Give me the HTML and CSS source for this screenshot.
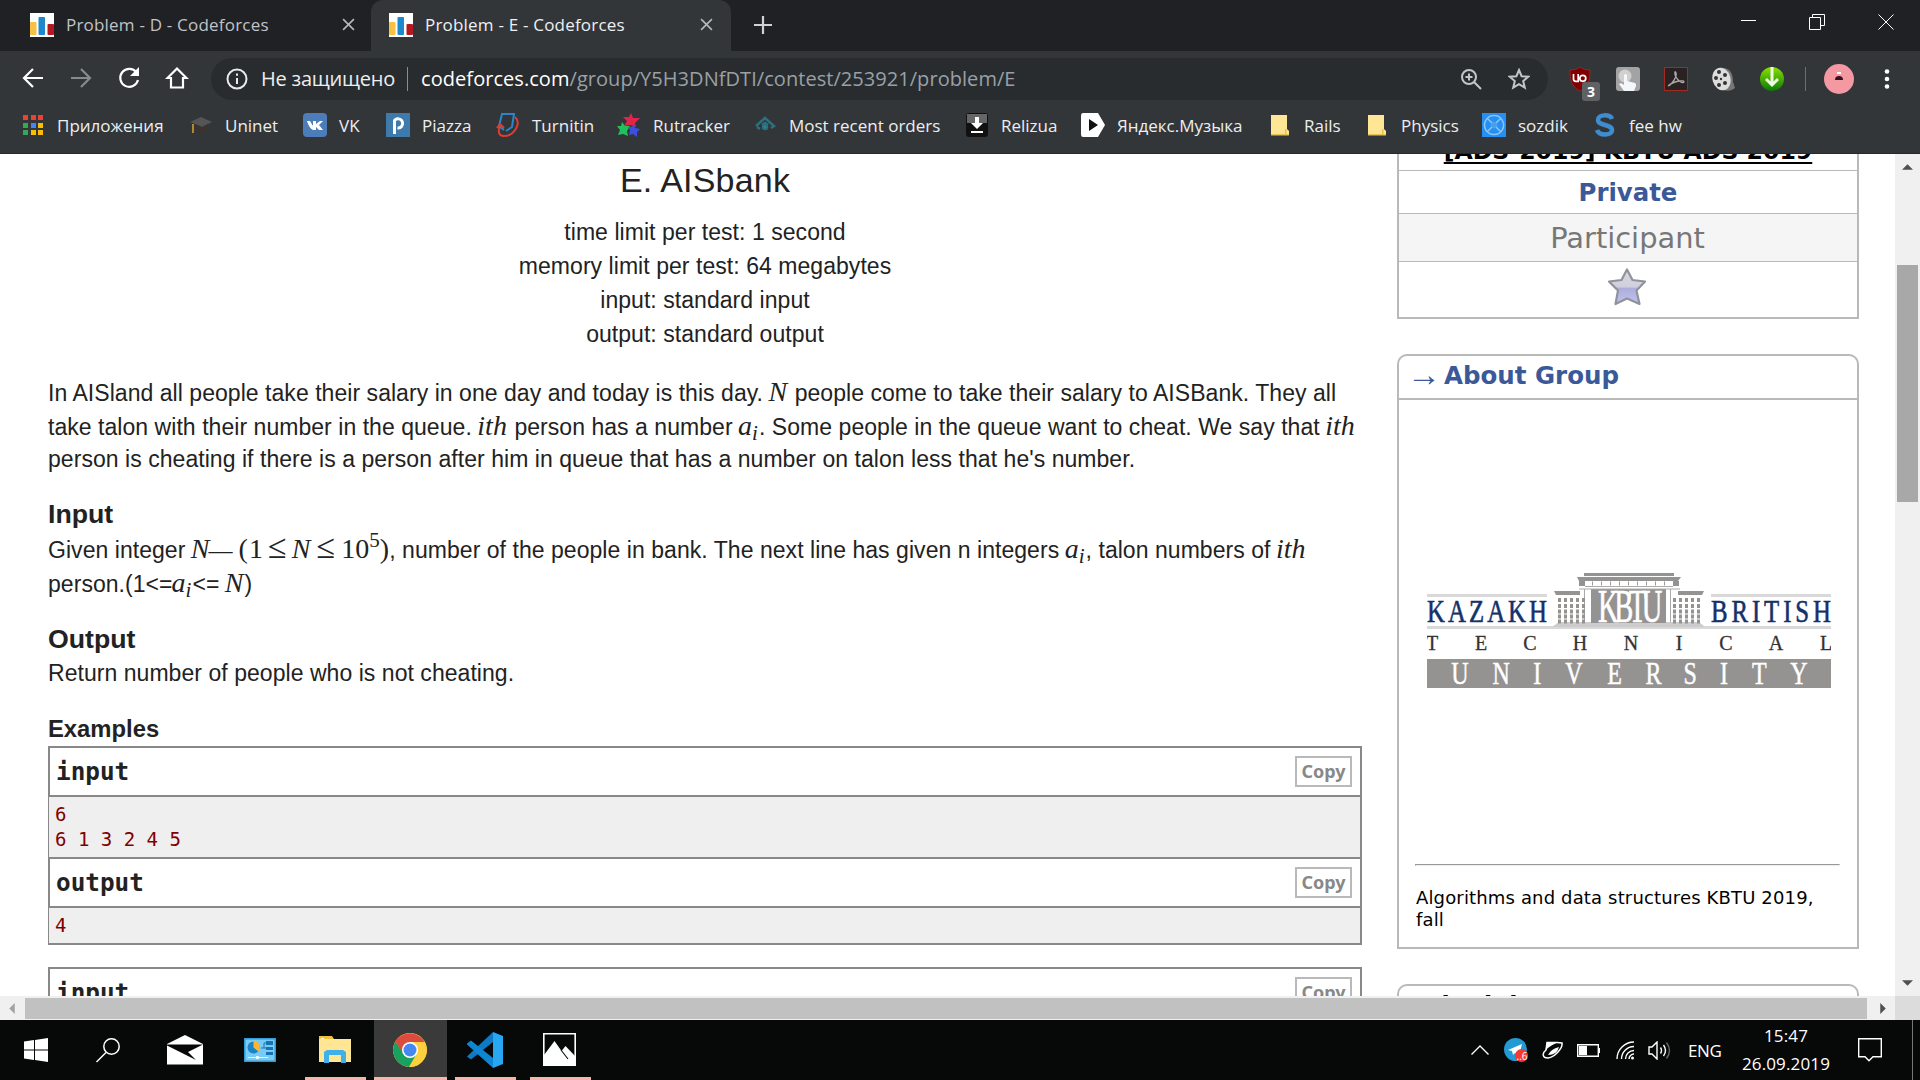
FILE: index.html
```html
<!DOCTYPE html>
<html lang="ru">
<head>
<meta charset="utf-8">
<title>Problem - E - Codeforces</title>
<link rel="stylesheet" href="styles.css">
</head>
<body>
<svg width="0" height="0" class="defs">
  <defs>
    <symbol id="cf" viewBox="0 0 24 24"><path fill="#fff" d="M0 0h24v24H0z"/><rect x="0" y="9" width="6.500" height="13" rx="1" fill="#f7c244"/><rect x="8.500" y="4" width="6.500" height="18" rx="1" fill="#1e88cc"/><rect x="17.500" y="11" width="6.500" height="11" rx="1" fill="#b5191f"/></symbol>
    <symbol id="folder" viewBox="0 0 24 24"><path fill="#ffe694" d="M3 2h16v14l2 2v4H3z"/><path fill="#e8c252" d="M3 21h18v1.500H3zM17 16h1.500v5H17z"/></symbol>
  </defs>
</svg>

<header class="tabs">
  <div class="tab"><svg class="fav"><use href="#cf"/></svg><span class="tab-title">Problem - D - Codeforces</span><svg class="x" viewBox="0 0 12 12"><path d="M1 1l10 10M11 1L1 11"/></svg></div>
  <div class="tab active"><svg class="fav"><use href="#cf"/></svg><span class="tab-title">Problem - E - Codeforces</span><svg class="x" viewBox="0 0 12 12"><path d="M1 1l10 10M11 1L1 11"/></svg></div>
  <svg class="plus" viewBox="0 0 18 18"><path d="M9 0v18M0 9h18"/></svg>
  <div class="win">
    <svg width="15" height="16" viewBox="0 0 15 16"><path d="M0 6.500h15"/></svg>
    <svg width="16" height="16" viewBox="0 0 16 16"><path d="M.5 3.500h11v12H.5zM3.500 3V.5h12v11H12"/></svg>
    <svg width="16" height="16" viewBox="0 0 16 16"><path d="M.5.5l15 15M15.500.5l-15 15"/></svg>
  </div>
</header>

<div class="toolbar">
  <svg class="nav" viewBox="0 0 24 24"><path d="M22 12H4M12 3l-9 9 9 9"/></svg>
  <svg class="nav dim" viewBox="0 0 24 24"><path d="M2 12h18M12 3l9 9-9 9"/></svg>
  <svg class="nav" viewBox="0 0 24 24"><path d="M19.500 6.500A9 9 0 1 0 21 14"/><path class="solid" d="M22 1v9h-9z"/></svg>
  <svg class="nav" viewBox="0 0 24 24"><path d="M12 2.500L2.500 12H6v9.500h12V12h3.500z"/></svg>
  <div class="omni">
    <svg class="info" viewBox="0 0 22 22"><circle cx="11" cy="11" r="9.500"/><path d="M11 10v6M11 5.500v2.200"/></svg>
    <span class="unsafe">Не защищено</span><i class="sep"></i>
    <span class="url"><b>codeforces.com</b>/group/Y5H3DNfDTI/contest/253921/problem/E</span>
    <svg class="oi" viewBox="0 0 22 22"><circle cx="9" cy="9" r="7"/><path d="M14 14l7 7M9 5.500v7M5.500 9h7"/></svg>
    <svg class="oi" viewBox="0 0 22 22"><path d="M11 2l2.600 6.200 6.700.5-5.100 4.400 1.600 6.600L11 16.200l-5.800 3.500 1.600-6.600L1.700 8.700l6.700-.5z"/></svg>
  </div>
  <div class="ext">
    <div class="ub"><svg width="24" height="24" viewBox="0 0 24 24"><path fill="#800000" stroke="#a33" stroke-width=".6" d="M12 0c3 2.500 6 3 10 3 0 10-1 16-10 21C3 19 2 13 2 3c4 0 7-.5 10-3z"/><path fill="none" stroke="#fff" stroke-width="1.700" d="M5.500 7v5q0 2.300 2.300 2.300h2.400V7"/><circle cx="14.800" cy="11.300" r="3" fill="none" stroke="#fff" stroke-width="1.700"/></svg><em>3</em></div>
    <svg width="24" height="24" viewBox="0 0 24 24"><rect width="24" height="24" rx="3" fill="#a3a3a3"/><circle cx="9" cy="9" r="6.500" fill="#d0d0d0"/><path fill="#f4f8fd" d="M8 8q2-2 3 0v6l8 2q1.500 1 1 3l-2 5H8l-5-7q2-2 5 1z"/></svg>
    <svg width="24" height="24" viewBox="0 0 24 24"><path fill="#2a2222" stroke="#a22a20" d="M.5.5h23v23H.5z"/><path fill="none" stroke="#aaa" stroke-width="1.300" d="M4 19c5-2 9-10 8-13s-2 0 0 4 7 7 8 5-9-2-16 4z"/></svg>
    <svg width="24" height="24" viewBox="0 0 24 24"><path fill="#777" d="M7 1q14-2 14 14l2 6q-4 4-12 2z"/><ellipse cx="9.500" cy="12" rx="9" ry="11.500" fill="#ddd" transform="rotate(-15 9.500 12)"/><g fill="#333"><circle cx="7" cy="5" r="2"/><circle cx="13" cy="8" r="2"/><circle cx="4" cy="11" r="2"/><circle cx="9" cy="12" r="1.200"/><circle cx="7" cy="18" r="2"/><circle cx="13" cy="16" r="2"/></g></svg>
    <svg width="24" height="24" viewBox="0 0 24 24"><defs><linearGradient id="gg" x2="0" y2="1"><stop stop-color="#8be000"/><stop offset="1" stop-color="#087a05"/></linearGradient></defs><circle cx="12" cy="12" r="12" fill="url(#gg)"/><path fill="none" stroke="#eafbe0" stroke-width="3" d="M12 0v17M6 12l6 6 6-6"/></svg>
    <i class="bar"></i>
    <svg class="avatar" width="30" height="30" viewBox="0 0 30 30"><circle cx="15" cy="15" r="15" fill="#f498a2"/><path fill="#3a1020" d="M11 16q0-4 4-4t4 4z"/><path fill="#fff" d="M13 8h4v2h-4z"/></svg>
    <svg class="kebab" width="6" height="20" viewBox="0 0 6 20" fill="#fff"><circle cx="3" cy="2.500" r="2.300"/><circle cx="3" cy="10" r="2.300"/><circle cx="3" cy="17.500" r="2.300"/></svg>
  </div>
</div>

<nav class="bookmarks">
  <a><svg viewBox="0 0 24 24"><g fill="#ea4335"><path d="M2 2h5v5H2zM10 2h5v5h-5zM17 2h5v5h-5z"/></g><path fill="#34a853" d="M2 10h5v5H2zM2 17h5v5H2z"/><path fill="#4285f4" d="M10 10h5v5h-5z"/><path fill="#fbbc05" d="M17 10h5v5h-5zM10 17h5v5h-5zM17 17h5v5h-5z"/></svg><span>Приложения</span></a>
  <a><svg viewBox="0 0 24 24"><path fill="#555" d="M1 9l11-5 11 5-10 5z"/><path fill="#3a3330" d="M6 11l7 3 6-3v7q-6 4-13 0z"/><path stroke="#e2a52b" stroke-width="1.500" d="M4 11v9" fill="none"/></svg><span>Uninet</span></a>
  <a><svg viewBox="0 0 24 24"><rect width="24" height="24" rx="4" fill="#4d7db8"/><path d="M4 8h3l3 5V8h3v3l4-3h3l-4 4 4 5h-4l-3-3v3h-3Q6 15 4 8z" fill="#fff"/></svg><span>VK</span></a>
  <a><svg viewBox="0 0 24 24"><path fill="#3e7aab" d="M0 0h24v24H0z"/><path d="M8.500 21V7.500a4.600 4.600 0 1 1 3 7.500" fill="none" stroke="#fff" stroke-width="3"/></svg><span>Piazza</span></a>
  <a><svg viewBox="0 0 24 24" fill="none" stroke-width="2"><path stroke="#2b85c8" d="M8 17L3 13 6 1h12l-2 13-6 4"/><path stroke="#e23b30" d="M19 4c7 6-1 19-11 19-6 0-6-5-4-11M1 15l3-4 4 4"/></svg><span>Turnitin</span></a>
  <a><svg viewBox="0 0 24 24"><path fill="#e0244b" d="M14 0l2 5 7 0-5 5 1 4-6-2-6 1 3-5-4-4h6z"/><path fill="#1fc25a" d="M5 9l3 4 5 0-3 5 1 5-5-2-5 1 2-5-3-4h4z"/><path fill="#3d4fe0" d="M17 11l1 4 5 1-3 3 0 5-4-3-4 1 1-5-2-3h4z"/></svg><span>Rutracker</span></a>
  <a><svg viewBox="0 0 24 24" fill="none" stroke="#2b7180" stroke-width="2.500"><path d="M3 13l9-8 9 8-3 2M7 16l-3-2M9 12l3-2 3 2"/><circle cx="12" cy="14" r="2" fill="#36a0ae"/></svg><span>Most recent orders</span></a>
  <a><svg viewBox="0 0 24 24"><rect x="1" width="22" height="24" rx="3" fill="#111"/><path fill="#666" d="M2 1h20v9H2z"/><path fill="#fff" d="M10 4h4v6h4l-6 6-6-6h4zM6 18h12v2H6z"/></svg><span>Relizua</span></a>
  <a><svg viewBox="0 0 24 24"><path fill="#fff" d="M2 0h15l7 12-7 12H2q-2 0-2-3V3q0-3 2-3z"/><path fill="#111" d="M8 6l9 6-9 6z"/></svg><span>Яндекс.Музыка</span></a>
  <a><svg><use href="#folder"/></svg><span>Rails</span></a>
  <a><svg><use href="#folder"/></svg><span>Physics</span></a>
  <a><svg viewBox="0 0 24 24"><path fill="#2490f4" d="M0 0h24v24H0z"/><path fill="none" stroke="#8cc4f5" stroke-width="1.500" d="M5 5l14 14M19 5L5 19M12 2.500a9.500 9.500 0 1 0 .1 0"/><path fill="#4a9fe8" d="M12 8l4 4-4 4-4-4z"/></svg><span>sozdik</span></a>
  <a><svg viewBox="0 0 24 24"><path fill="none" stroke="#3f8dd0" stroke-width="4.500" d="M19 6C17 1 5 1 5 7s14 4 14 10-13 6-15 0"/></svg><span>fee hw</span></a>
</nav>

<main class="view">
  <div class="page">
    <section class="problem">
      <div class="title">E. AISbank</div>
      <div class="limits"><div>time limit per test: 1 second</div><div>memory limit per test: 64 megabytes</div><div>input: standard input</div><div>output: standard output</div></div>
      <div class="para">
        <div class="ln l1">In AISland all people take their salary in one day and today is this day. <i>N</i> people come to take their salary to AISBank. They all</div>
        <div class="ln l2">take talon with their number in the queue. <i>ith</i> person has a number <i>a<sub>i</sub></i>. Some people in the queue want to cheat. We say that <i>ith</i></div>
        <div class="ln l3">person is cheating if there is a person after him in queue that has a number on talon less that he's number.</div>
      </div>
      <h2>Input</h2>
      <div class="para given">
        <div class="ln">Given integer <i>N</i><span class="m dash">—</span><span class="m"><span class="open">(</span>1</span><span class="m le">≤</span><i>N</i><span class="m le">≤</span><span class="m">10<sup>5</sup>)</span>, number of the people in bank. The next line has given n integers <i>a<sub>i</sub></i>, talon numbers of <i>ith</i></div>
        <div class="ln">person.(1&lt;=<i>a<sub>i</sub></i>&lt;= <i>N</i>)</div>
      </div>
      <h2>Output</h2>
      <div class="para out"><div class="ln">Return number of people who is not cheating.</div></div>
      <h3>Examples</h3>
      <div class="sample">
        <div class="io"><span>input</span><button>Copy</button></div>
        <pre>6
6 1 3 2 4 5</pre>
        <div class="io"><span>output</span><button>Copy</button></div>
        <pre class="short">4</pre>
      </div>
      <div class="sample"><div class="io"><span>input</span><button>Copy</button></div></div>
    </section>
    <aside>
      <div class="box group">
        <div class="gname"><u>[ADS-2019] KBTU ADS 2019</u></div>
        <div class="gpriv">Private</div>
        <div class="gpart">Participant</div>
        <div class="gstar"><svg width="40" height="40" viewBox="0 0 40 40"><defs><linearGradient id="sg" x2="0" y2="1"><stop stop-color="#d9d9dd"/><stop offset=".5" stop-color="#cfcfe0"/><stop offset=".55" stop-color="#aeaedd"/><stop offset="1" stop-color="#c2c2f2"/></linearGradient></defs><path d="M20 2.500l5.500 10.500 12.500 1.500-8.500 9 3 13.500-12.500-5.500L8.500 37l2.500-13.500L2 14.500 14.500 13z" fill="url(#sg)" stroke="#92929c" stroke-width="2.200" stroke-linejoin="round"/></svg></div>
      </div>
      <div class="box about">
        <div class="cap"><span class="arr">→</span>About Group</div>
        <svg class="logo" viewBox="0 0 404 118" width="404" height="118">
          <g fill="#d9d9d9"><path d="M0 21h120v3H0zM284 21h120v3H284zM0 53h404v3H0z"/></g>
          <path fill="#ccc" d="M132 49h140l6 5H125z"/>
          <g fill="#959391"><path d="M157 0h90v3h-90zM150 4h104l-3 4H152zM152 8h6v5h-6zM246 8h6v5h-6zM127 18h26v4h-24zM251 18h26l-2 4h-24zM164 16h75v34h-75z"/></g>
          <path fill="none" stroke="#aaa" d="M158 13.500h88M152 16h101M157.500 16v33M243.500 16v33"/>
          <path stroke="#959391" stroke-width="4" stroke-dasharray="3 3" d="M131 27h28M131 33h28M131 38.500h28M131 43.500h28M131 48.500h28M246 27h28M246 33h28M246 38.500h28M246 43.500h28M246 48.500h28"/>
          <path stroke="#999" stroke-dasharray="1 8" stroke-width="4" d="M165 10.500h76"/>
          <g class="serif">
            <g transform="translate(0 48.500) scale(.8 1)"><text font-size="31" fill="#14316b" textLength="150" lengthAdjust="spacing" class="logo-b">KAZAKH</text></g>
            <g transform="translate(284 48.500) scale(.8 1)"><text font-size="31" fill="#14316b" textLength="150" lengthAdjust="spacing" class="logo-b">BRITISH</text></g>
            <g transform="translate(171 48.500) scale(.62 1)"><text font-size="46" fill="#fff" stroke="#fff" stroke-width=".7" textLength="104" lengthAdjust="spacing">KBTU</text></g>
            <g font-size="20" fill="#333" text-anchor="middle" class="tech"><text x="5" y="77">T</text><text x="54" y="77">E</text><text x="103" y="77">C</text><text x="153" y="77">H</text><text x="204" y="77">N</text><text x="252" y="77">I</text><text x="299" y="77">C</text><text x="349" y="77">A</text><text x="399" y="77">L</text></g>
            <path fill="#959391" d="M0 86h404v29H0z"/>
            <g font-size="32" fill="#fff" stroke="#fff" stroke-width=".5" text-anchor="middle" transform="scale(.75 1)"><text x="44" y="111">U</text><text x="99" y="111">N</text><text x="147" y="111">I</text><text x="196" y="111">V</text><text x="250" y="111">E</text><text x="302" y="111">R</text><text x="351" y="111">S</text><text x="396" y="111">I</text><text x="443" y="111">T</text><text x="496" y="111">Y</text></g>
          </g>
        </svg>
        <hr>
        <p>Algorithms and data structures KBTU 2019,<br>fall</p>
      </div>
      <div class="box next"><span>Schedule</span></div>
    </aside>
  </div>
  <div class="vs"><svg class="up" viewBox="0 0 12 6"><path d="M0 6l6-6 6 6z"/></svg><i></i><svg class="dn" viewBox="0 0 12 6"><path d="M0 0l6 6 6-6z"/></svg></div>
</main>
<div class="hs"><svg class="lt" viewBox="0 0 6 12"><path d="M6 0L0 6l6 6z"/></svg><i></i><svg class="rt" viewBox="0 0 6 12"><path d="M0 0l6 6-6 6z"/></svg><b></b></div>

<footer class="taskbar">
  <div class="app"><svg width="24" height="24" viewBox="0 0 24 24" fill="#fff"><path d="M0 3.500l10-1.500v9.500H0zM11 2l13-2v11.500H11zM0 12.500h10V22L0 20.500zM11 12.500h13V24l-13-2z"/></svg></div>
  <div class="app"><svg width="24" height="25" viewBox="0 0 24 25" fill="none" stroke="#fff" stroke-width="1.500"><circle cx="15.500" cy="8.500" r="7.700"/><path d="M10 14.500L.5 24"/></svg></div>
  <div class="app"><svg width="36" height="30" viewBox="0 0 36 30"><path fill="#fff" d="M0 9L18 0l18 9v20.500H0z"/><path fill="#080808" d="M0 9.500h36L21 17l8 8L0 10.500z"/></svg></div>
  <div class="app"><svg width="32" height="24" viewBox="0 0 32 24"><path fill="#2f9ad8" d="M0 0h32v24H0z"/><path fill="#77cbf5" d="M1.500 1.500h29v21h-29z"/><circle cx="9.500" cy="9.500" r="6" fill="#1c83c6"/><path fill="#ffb62e" d="M9.500 9.500V2.500a7 7 0 0 1 5 11z"/><path fill="#1873b5" d="M22 3h7v4h-7zM22 9h7v3h-7zM22 14h7v3h-7z"/><path fill="none" stroke="#1873b5" d="M17 10h3V5h2M20 10h2"/><path fill="#e6f7ff" d="M4 19h20v1H4zM12 18h3v3h-3z"/></svg></div>
  <div class="app run exp"><svg width="32" height="28" viewBox="0 0 32 28"><path fill="#f2c13f" d="M0 0h13l2 3v4H0z"/><path fill="#ffe694" d="M0 3h32v23H0z"/><path fill="#3fb0e8" d="M5 27V16l3-2h16l3 2v11h-5v-8H10v8z"/><path fill="#fff" d="M2 2h3v1H2z"/></svg></div>
  <div class="app run on"><svg width="34" height="34" viewBox="0 0 34 34"><circle cx="17" cy="17" r="17" fill="#fccf3f"/><path fill="#dd4b3e" d="M2.300 8.500A17 17 0 0 1 31.700 9H17L9.500 20z"/><path fill="#19a15f" d="M2.300 8.500A17 17 0 0 0 16 34l8-12-13-1z"/><path fill="#dd4b3e" d="M2.300 8.500L10 20V9z"/><path fill="#fccf3f" d="M17 9h14.700A17 17 0 0 1 16 34l7.500-13z"/><circle cx="17" cy="17" r="8" fill="#fff"/><circle cx="17" cy="17" r="6.500" fill="#4688f1"/></svg></div>
  <div class="app run vsc"><svg width="36" height="36" viewBox="0 0 36 36"><path fill="#0f79c4" d="M0 24.500L26 0v10L4 27.500z"/><path fill="#0e87d3" d="M0 11.500l4-3L26 26v10L0 12.500z"/><path fill="#29a6f2" d="M26 0l10 4v28l-10 4z"/></svg></div>
  <div class="app run pic"><svg width="33" height="33" viewBox="0 0 33 33"><path fill="none" stroke="#fff" stroke-width="1.600" d="M.8.8h31.400v31.400H.8z"/><path fill="#fff" d="M1 22L11.500 8l7 10 4-5L32 23v9.500H1z"/><path stroke="#080808" stroke-width="1.100" d="M18 17l7 9"/></svg></div>
  <div class="tray">
    <svg class="t1" width="18" height="10" viewBox="0 0 18 10"><path d="M.5 9.500L9 1l8.500 8.500"/></svg>
    <svg class="t2" width="24" height="24" viewBox="0 0 24 24"><circle cx="11.500" cy="11.500" r="11.500" fill="#2399d5"/><path fill="#fff" d="M4 12l14-6-3 12-4-3-2 2-1-4z"/><circle cx="17.500" cy="17.500" r="6.500" fill="#f33b35"/><text x="12.500" y="21.500" font-size="10" fill="#fff">..6</text></svg>
    <svg class="t3" width="21" height="18" viewBox="0 0 21 18"><path fill="none" stroke="#fff" stroke-width="1.500" d="M5 1.500h10l5 .5c1 5-7 14-14 15-6 0-6-5-2-8z"/><path fill="#fff" d="M5 1h12Q8 4 3.500 9.500zM6 14q3-6 11-8-2 8-11 8z"/></svg>
    <svg class="t4" width="23" height="13" viewBox="0 0 23 13"><path d="M.7.7h20.600v11.600H.7z"/><path fill="#fff" stroke="none" d="M2 2h8v9H2zM21 4h2v5h-2z"/></svg>
    <svg class="t5" width="19" height="19" viewBox="0 0 19 19"><path d="M1 18A17 17 0 0 1 18 1M5.500 18A12.500 12.500 0 0 1 18 5.500M9.500 18A8.500 8.500 0 0 1 18 9.500M13 18a5 5 0 0 1 5-5"/><circle cx="16.500" cy="17" r="1.500" fill="#fff" stroke="none"/></svg>
    <svg class="t6" width="23" height="19" viewBox="0 0 23 19"><path d="M1 6h3l5-5v17l-5-5H1zM12.500 6.500q2 3 0 6M15.500 4q4 5.500 0 11"/><path stroke="#666" d="M18.500 1.500q6 8 0 16"/></svg>
    <span class="lang">ENG</span>
    <div class="clock"><div>15:47</div><div>26.09.2019</div></div>
    <svg class="t7" width="24" height="24" viewBox="0 0 24 24"><path d="M.7.7h22.600v18H15l-4 4-4-4H.7z"/></svg>
    <i class="peek"></i>
  </div>
</footer>
</body>
</html>
```
FILE: styles.css
```css
* { box-sizing: border-box; }
body { margin: 0; width: 1920px; height: 1080px; overflow: hidden; display: flex; flex-direction: column; background: #fff; font-family: "Open Sans", "Noto Sans", sans-serif; }
svg { display: block; flex: none; }
.defs { position: absolute; }

/* tab strip */
.tabs { height: 51px; flex: none; background: #202124; display: flex; align-items: center; color: #c0c3c7; }
.tab { width: 360px; height: 51px; padding: 0 16px 2px 20px; display: flex; align-items: center; font-size: 17px; }
.tab:first-child { margin-left: 10px; width: 361px; }
.tab.active { background: #323639; color: #eef0f2; border-radius: 12px 12px 0 0; padding-left: 18px; }
.fav { width: 24px; height: 24px; margin-right: 12px; }
.tab-title { flex: 1; letter-spacing: .2px; white-space: nowrap; margin-top: -1px; }
.x { width: 13px; height: 13px; stroke: #b5b8bb; stroke-width: 1.500; }
.tab.active .x { margin-right: 2px; }
.plus { width: 18px; height: 18px; margin-left: 23px; margin-top: -2px; stroke: #d0d2d5; stroke-width: 2.200; }
.win { margin-left: auto; margin-right: 26px; display: flex; gap: 53px; fill: none; stroke: #fff; padding-bottom: 8px; }

/* toolbar */
.toolbar { height: 52px; flex: none; background: #323639; display: flex; align-items: center; padding: 3px 0 0 21px; }
.nav { width: 24px; height: 24px; margin-right: 24px; margin-top: -2px; fill: none; stroke: #fff; stroke-width: 2.200; }
.nav .solid { fill: #fff; stroke: none; }
.nav.dim { stroke: #888b8e; }
.omni { width: 1337px; flex: none; height: 42px; border-radius: 21px; background: #282c2f; margin-left: -2px; display: flex; align-items: center; padding: 0 18px 0 15px; font-size: 20px; color: #eceef0; white-space: nowrap; }
.info { width: 22px; height: 22px; fill: none; stroke: #e8eaed; stroke-width: 2; margin-right: 13px; }
.unsafe { letter-spacing: -.22px; }
.sep { width: 1px; height: 24px; background: #8b8e91; margin: 0 13px 0 12px; }
.url { color: #9aa0a6; flex: 1; letter-spacing: .05px; }
.url b { font-weight: 400; color: #fff; }
.oi { width: 22px; height: 22px; fill: none; stroke: #c3c6c9; stroke-width: 2; margin-left: 26px; }
.ext { display: flex; align-items: center; gap: 24px; padding-left: 20px; }
.ub { position: relative; }
.ub em { position: absolute; left: 14px; top: 15px; width: 18px; height: 19px; border-radius: 3px; background: #5f6265; color: #fff; font: bold 14px/19px "Open Sans", sans-serif; text-align: center; }
.bar { width: 1px; height: 24px; background: #6c6f72; margin-left: -3px; }
.avatar { margin-left: -6px; }
.kebab { margin-left: 6px; }

/* bookmarks */
.bookmarks { height: 51px; flex: none; background: #323639; border-bottom: 1px solid #26292c; padding: 0 0 6px 21px; display: grid; grid-template-columns: 168px 114px 83px 110px 121px 136px 212px 116px 187px 97px 117px 111px 110px; align-items: center; font-size: 17px; color: #eceef0; }
.bookmarks a { display: flex; align-items: center; gap: 12px; white-space: nowrap; }
.bookmarks svg { width: 24px; height: 24px; }

/* page viewport */
.view { height: 842px; flex: none; display: flex; overflow: hidden; }
.page { width: 1895px; height: 842px; overflow: hidden; padding-left: 48px; display: flex; gap: 35px; align-items: flex-start; }
.problem { width: 1314px; flex: none; color: #222; font: 23px/34px "Liberation Sans", Arial, sans-serif; white-space: nowrap; }
.title { font-size: 34px; line-height: 39px; text-align: center; margin-top: 7px; letter-spacing: .2px; }
.limits { margin-top: 15px; text-align: center; letter-spacing: .05px; }
.para { margin-top: 25px; letter-spacing: .045px; }
.ln { height: 34px; }
.l3 { height: 30px; line-height: 30px; }
.para i, .m { font-family: "Liberation Serif", "Times New Roman", serif; font-size: 28px; line-height: 0; }
.para i { margin: 0 1px 0 -1px; }
.para sub { font-size: 21px; line-height: 0; vertical-align: -5px; }
.para sup { font-size: 21px; line-height: 0; vertical-align: 11px; }
.para .dash { font-size: 24px; margin: 0 6px 0 -2px; }
.open { margin-right: 1px; }
.para .le { margin: 0 6px 0 5px; font-size: 34px; }
h2 { font-size: 26.700px; line-height: 31px; margin: 25px 0 0; }
.given { margin-top: 3px; }
.given + h2 { margin-top: 23px; }
.out { margin-top: 1px; }
h3 { font-size: 23.800px; line-height: 30px; margin: 24px 0 2px; }
.sample { border: 2px solid #888; border-width: 0 2px 2px 1px; margin-bottom: 22px; }
.io { height: 51px; border: 2px solid #888; border-width: 2px 0 2px 1px; display: flex; align-items: center; justify-content: space-between; padding: 0 8px 0 6px; font: bold 24.300px "DejaVu Sans Mono", monospace; }
.io button { width: 57px; height: 31px; border: 2px solid #b9b9b9; background: #fff; color: #888; font: bold 18px/26px "Noto Sans", sans-serif; padding: 0; margin-top: -1px; }
pre { margin: 0; height: 60px; background: #efefef; color: #800000; font: 19px/25px "DejaVu Sans Mono", monospace; padding: 5px 0 0 6px; }
pre.short { height: 35px; }

/* sidebar */
aside { width: 462px; font-family: "DejaVu Sans", Verdana, sans-serif; }
.box { border: 2px solid #b9b9b9; text-align: center; white-space: nowrap; }
.group { border-top: 0; height: 165px; }
.gname { display: flow-root; height: 17px; border-bottom: 1px solid #b9b9b9; font-weight: bold; font-size: 23.600px; line-height: 28px; color: #000; }
.gname u { display: block; margin-top: -17px; text-decoration-thickness: 2px; text-underline-offset: 3px; }
.gpriv { height: 43px; border-bottom: 1px solid #b9b9b9; font-weight: bold; font-size: 24.400px; line-height: 44px; color: #3b5998; }
.gpart { height: 48px; border-bottom: 1px solid #b9b9b9; background: #f5f5f5; font-size: 28.900px; line-height: 49px; color: #777; padding-right: 1px; }
.gstar { display: flex; justify-content: center; padding: 5px 2px 0 0; }
.about { margin-top: 35px; height: 595px; border-radius: 10px 10px 0 0; text-align: left; }
.cap { height: 44px; border-bottom: 2px solid #b9b9b9; color: #3b5998; font-weight: bold; font-size: 24.500px; line-height: 40px; padding-left: 8px; display: flex; }
.arr { font-weight: 400; width: 37px; font-size: 34px; line-height: 38px; font-family: "Liberation Serif", serif; }
.logo { margin: 173px 0 0 28px; }
.serif { font-family: "Liberation Serif", serif; }
.logo-b { stroke: #14316b; stroke-width: .6; }
.tech { stroke: #333; stroke-width: .3; }
hr { margin: 173px 17px 0 16px; border: 1px solid; border-color: #999 #eee #eee #999; }
.about p { margin: 21px 0 0 17px; font-size: 18px; line-height: 22px; letter-spacing: .15px; color: #000; }
.next { margin-top: 35px; height: 60px; border-radius: 10px 10px 0 0; text-align: left; font-weight: bold; font-size: 24px; line-height: 41px; padding-left: 11px; }

/* scrollbars */
.vs { width: 25px; background: #f0f0f0; display: flex; flex-direction: column; align-items: center; padding-top: 10px; }
.vs svg, .hs svg { fill: #505050; }
.up, .dn { width: 11px; height: 6px; }
.vs i { width: 21px; height: 237px; background: #a8a8a8; margin: 95px 0 478px; }
.hs { height: 24px; flex: none; background: #f0f0f0; display: flex; align-items: center; }
.hs .lt { width: 6px; height: 11px; margin: 0 10px 0 9px; fill: #a3a3a3; }
.hs .rt { width: 6px; height: 11px; margin: 0 9px 0 13px; }
.hs i { width: 1842px; height: 21px; background: #c1c1c1; }
.hs b { flex: 1; height: 24px; background: #dcdcdc; }

/* taskbar */
.taskbar { height: 60px; flex: none; background: #070808; display: flex; align-items: stretch; color: #fff; }
.app { width: 72px; display: flex; align-items: center; justify-content: center; }
.app:nth-child(3) { width: 81px; }
.app:nth-child(4) { width: 69px; }
.run { border-bottom: 3px solid #f5b5a8; padding-top: 2px; width: 61px; margin-left: 8px; }
.exp { margin-left: 11px; padding-right: 1px; }
.on { width: 73px; background: #3a3a3a; padding-right: 1px; }
.vsc { padding-right: 2px; }
.pic { margin-left: 14px; padding-right: 2px; }
.tray { margin-left: auto; display: flex; align-items: center; fill: none; stroke: #fff; stroke-width: 1.400; font-size: 17px; }
.t2, .t3 { stroke: none; }
.t2 { margin-left: 15px; }
.t3 { margin-left: 14px; }
.t4 { margin-left: 14px; }
.t5 { margin-left: 16px; }
.t6 { margin-left: 13px; }
.lang { margin-left: 17px; width: 53px; letter-spacing: -.4px; }
.clock { width: 90px; text-align: center; line-height: 28px; letter-spacing: .15px; }
.t7 { margin-left: 27px; }
.peek { width: 8px; height: 60px; border-left: 1px solid #777; margin-left: 30px; }
```
